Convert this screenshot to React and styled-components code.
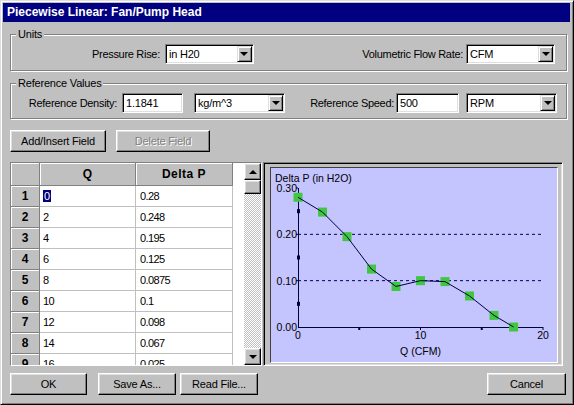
import React from 'react';
import styled, { createGlobalStyle, css } from 'styled-components';

const face = '#c0c0c0';

const GlobalStyle = createGlobalStyle`
  html, body {
    margin: 0;
    padding: 0;
    background: ${face};
  }
  body {
    font-family: "Liberation Sans", Arial, sans-serif;
    font-size: 11px;
    color: #000;
  }
  * { box-sizing: border-box; }
`;

const raised = css`
  background: ${face};
  border: 1px solid;
  border-color: #fff #000 #000 #fff;
  box-shadow: inset -1px -1px 0 #808080, inset 1px 1px 0 #dfdfdf;
`;

const sunken = css`
  border: 1px solid;
  border-color: #808080 #fff #fff #808080;
  box-shadow: inset 1px 1px 0 #000, inset -1px -1px 0 #dfdfdf;
`;

const Window = styled.div`
  width: 574px;
  height: 405px;
  background: ${face};
  border: 1px solid;
  border-color: #dfdfdf #000 #000 #dfdfdf;
  box-shadow: inset 1px 1px 0 #fff, inset -1px -1px 0 #808080;
  padding: 2px 3px 3px 2px;
  display: flex;
  flex-direction: column;
`;

const TitleBar = styled.div`
  height: 19px;
  background: #000080;
  color: #fff;
  font-weight: bold;
  font-size: 12px;
  line-height: 19px;
  padding-left: 4px;
  white-space: nowrap;
`;

const Body = styled.div`
  padding: 0 3px 0 7px;
  display: flex;
  flex-direction: column;
`;

const GroupBox = styled.fieldset`
  margin: ${p => p.$top}px 0 0;
  padding: 3px 5px ${p => p.$bottom}px;
  border: 1px solid #808080;
  box-shadow: inset 1px 1px 0 #fff, 1px 1px 0 #fff;
  min-width: 0;
`;

const Legend = styled.legend`
  padding: 0 2px;
  line-height: 13px;
  font-size: 11px;
  letter-spacing: -0.2px;
  background: ${face};
`;

const UnitsRow = styled.div`
  display: flex;
  justify-content: space-between;
  align-items: center;
  padding: 0 6px 0 76px;
`;

const RefRow = styled.div`
  display: flex;
  align-items: center;
  padding: 0 4px 0 9px;
`;

const Field = styled.div`
  display: flex;
  align-items: center;
  gap: ${p => p.$gap}px;
`;

const Label = styled.span`
  white-space: nowrap;
  letter-spacing: -0.3px;
  ${p => p.$w && css`
    width: ${p.$w}px;
    text-align: right;
  `}
  margin-left: ${p => p.$ml || 0};
`;

const Combo = styled.div`
  ${sunken};
  width: ${p => p.$w}px;
  height: 20px;
  margin-left: ${p => p.$ml || 0}px;
  background: #fff;
  display: flex;
  align-items: center;
  padding: 1px 1px 1px 3px;
`;

const ComboText = styled.span`
  flex: 1;
  white-space: nowrap;
  letter-spacing: -0.2px;
`;

const DropButton = styled.span`
  width: 15px;
  height: 16px;
  background: ${face};
  border: 1px solid;
  border-color: #dfdfdf #000 #000 #dfdfdf;
  box-shadow: inset 1px 1px 0 #fff, inset -1px -1px 0 #808080;
  display: flex;
  align-items: center;
  justify-content: center;

  &::after {
    content: "";
    border-left: 4px solid transparent;
    border-right: 4px solid transparent;
    border-top: 4px solid #000;
  }
`;

const TextBox = styled.div`
  ${sunken};
  width: ${p => p.$w}px;
  height: 20px;
  margin-left: ${p => p.$ml || 0}px;
  background: #fff;
  display: flex;
  align-items: center;
  padding: 0 3px;
  letter-spacing: -0.2px;
`;

const ButtonRow = styled.div`
  display: flex;
  align-items: center;
  margin-top: ${p => p.$top}px;
`;

const Button = styled.button`
  ${raised};
  width: ${p => p.$w}px;
  height: 22px;
  margin-left: ${p => p.$ml || 0}px;
  margin-right: ${p => p.$mr || 0}px;
  padding: 0;
  font-family: "Liberation Sans", Arial, sans-serif;
  font-size: 11px;
  letter-spacing: -0.2px;
  color: #000;

  &:disabled {
    color: #808080;
    text-shadow: 1px 1px 0 #fff;
  }
`;

const Main = styled.div`
  display: flex;
  margin-top: 10px;
  height: 204px;
`;

const GridFrame = styled.div`
  width: 252px;
  height: 204px;
  border: 1px solid;
  border-color: #808080 #fff #fff #808080;
  display: flex;
  background: #fff;
`;

const Table = styled.div`
  flex: 1;
  display: grid;
  grid-template-columns: 29px 96px 97px 11px;
  grid-template-rows: 23px;
  grid-auto-rows: 21px;
  align-content: start;
  overflow: hidden;
`;

const HeadCell = styled.div`
  background: ${face};
  border-right: 1px solid #808080;
  border-bottom: 1px solid #808080;
  box-shadow: inset 1px 1px 0 #fff;
  display: flex;
  align-items: center;
  justify-content: center;
  font-weight: bold;
  font-size: 12px;
  letter-spacing: ${p => (p.$wide ? '0.5px' : '0')};
`;

const Cell = styled.div`
  background: #fff;
  border-right: 1px solid #c0c0c0;
  border-bottom: 1px solid #c0c0c0;
  padding-left: ${p => p.$pl}px;
  display: flex;
  align-items: center;
  font-size: 11px;
  letter-spacing: -0.6px;
`;

const Filler = styled.div`
  background: #fff;
`;

const Selected = styled.span`
  background: #000080;
  color: #fff;
  padding: 0 1px;
`;

const ScrollBar = styled.div`
  width: 17px;
  display: flex;
  flex-direction: column;
`;

const ScrollButton = styled.div`
  ${raised};
  height: 17px;
  display: flex;
  align-items: center;
  justify-content: center;

  &::after {
    content: "";
    border-left: 4px solid transparent;
    border-right: 4px solid transparent;
    ${p => (p.$dir === 'up'
      ? 'border-bottom: 4px solid #000;'
      : 'border-top: 4px solid #000;')}
  }
`;

const Thumb = styled.div`
  ${raised};
  height: 14px;
`;

const Track = styled.div`
  flex: 1;
  background-color: #fff;
  background-image: conic-gradient(#c0c0c0 25%, transparent 0 50%, #c0c0c0 0 75%, transparent 0);
  background-size: 2px 2px;
`;

const ChartFrame = styled.div`
  ${sunken};
  width: 300px;
  height: 204px;
  margin-left: 1px;
  padding: 4px 4px 2px 6px;
  background: ${face};
`;

const Plot = styled.div`
  width: 100%;
  height: 100%;
  background: #c4c4ff;
  border: 1px solid;
  border-color: #404040 #fff #fff #404040;

  svg {
    display: block;
    font-family: "Liberation Sans", Arial, sans-serif;
    font-size: 10.5px;
  }
`;

const rows = [
  [0, 0.28],
  [2, 0.248],
  [4, 0.195],
  [6, 0.125],
  [8, 0.0875],
  [10, 0.1],
  [12, 0.098],
  [14, 0.067],
  [16, 0.025],
];

const points = [...rows, [17.6, 0]];

const X0 = 27;
const Y0 = 159;
const SX = 12.25;
const SY = 463.3;
const px = q => X0 + q * SX;
const py = v => Y0 - v * SY;

const Chart = () => {
  const ink = '#000040';
  const line = points.map(([q, v]) => `${px(q)},${py(v)}`).join(' ');
  return (
    <svg width="286" height="194" viewBox="0 0 286 194">
      {[0.1, 0.2].map(v => (
        <line key={v} x1={X0} x2={px(20)} y1={py(v)} y2={py(v)}
          stroke="#000060" strokeDasharray="3 3" />
      ))}
      <line x1={X0} x2={px(20)} y1={Y0 + 0.5} y2={Y0 + 0.5} stroke={ink} />
      <line x1={X0 + 0.5} x2={X0 + 0.5} y1={py(0.3)} y2={Y0} stroke={ink} />
      {[0.05, 0.15, 0.25].map(v => (
        <rect key={v} x={X0 - 1} y={py(v) - 2} width="3" height="4" fill={ink} />
      ))}
      {[0.1, 0.2, 0.3].map(v => (
        <line key={v} x1={X0 - 2} x2={X0} y1={py(v)} y2={py(v)} stroke={ink} />
      ))}
      {[5, 15].map(q => (
        <line key={q} x1={px(q)} x2={px(q)} y1={Y0} y2={Y0 + 3} stroke={ink} strokeWidth="2" />
      ))}
      {[10, 20].map(q => (
        <line key={q} x1={px(q)} x2={px(q)} y1={Y0} y2={Y0 + 3} stroke={ink} />
      ))}
      {points.map(([q, v]) => (
        <rect key={q} x={px(q) - 4.5} y={py(v) - 4.5} width="9" height="9" fill="#40c640" />
      ))}
      <polyline points={line} fill="none" stroke={ink} />
      <text x="4" y="14" fill="#000">Delta P (in H2O)</text>
      {[
        ['0.30', 0.3],
        ['0.20', 0.2],
        ['0.10', 0.1],
        ['0.00', 0],
      ].map(([t, v]) => (
        <text key={t} x={X0 - 1} y={py(v) + 4} textAnchor="end" fill="#000">{t}</text>
      ))}
      {[0, 10, 20].map(q => (
        <text key={q} x={px(q)} y="171" textAnchor="middle" fill="#000">{q}</text>
      ))}
      <text x={px(10)} y="187" textAnchor="middle" fill="#000">Q (CFM)</text>
    </svg>
  );
};

const DataGrid = () => (
  <GridFrame>
    <Table>
      <HeadCell />
      <HeadCell>Q</HeadCell>
      <HeadCell $wide>Delta P</HeadCell>
      <Filler />
      {rows.map(([q, v], i) => (
        <React.Fragment key={i}>
          <HeadCell>{i + 1}</HeadCell>
          <Cell $pl={3}>{i === 0 ? <Selected>{q}</Selected> : q}</Cell>
          <Cell $pl={4}>{v}</Cell>
          <Filler />
        </React.Fragment>
      ))}
    </Table>
    <ScrollBar>
      <ScrollButton $dir="up" />
      <Thumb />
      <Track />
      <ScrollButton $dir="down" />
    </ScrollBar>
  </GridFrame>
);

const Select = ({ w, ml, value }) => (
  <Combo $w={w} $ml={ml}>
    <ComboText>{value}</ComboText>
    <DropButton />
  </Combo>
);

const App = () => (
  <>
    <GlobalStyle />
    <Window>
      <TitleBar>Piecewise Linear: Fan/Pump Head</TitleBar>
      <Body>
        <GroupBox $top={6} $bottom={6}>
          <Legend>Units</Legend>
          <UnitsRow>
            <Field $gap={5}>
              <Label>Pressure Rise:</Label>
              <Select w={89} value="in H20" />
            </Field>
            <Field $gap={3}>
              <Label>Volumetric Flow Rate:</Label>
              <Select w={89} value="CFM" />
            </Field>
          </UnitsRow>
        </GroupBox>

        <GroupBox $top={6} $bottom={5}>
          <Legend>Reference Values</Legend>
          <RefRow>
            <Label $w={92}>Reference Density:</Label>
            <TextBox $w={61} $ml={5}>1.1841</TextBox>
            <Select w={91} ml={11} value="kg/m^3" />
            <Label $ml="auto">Reference Speed:</Label>
            <TextBox $w={63} $ml={2}>500</TextBox>
            <Select w={91} ml={7} value="RPM" />
          </RefRow>
        </GroupBox>

        <ButtonRow $top={11}>
          <Button $w={96}>Add/Insert Field</Button>
          <Button $w={94} $ml={10} disabled>Delete Field</Button>
        </ButtonRow>

        <Main>
          <DataGrid />
          <ChartFrame>
            <Plot>
              <Chart />
            </Plot>
          </ChartFrame>
        </Main>

        <ButtonRow $top={7}>
          <Button $w={77}>OK</Button>
          <Button $w={78} $ml={11}>Save As...</Button>
          <Button $w={78} $ml={4}>Read File...</Button>
          <Button $w={79} $ml="auto" $mr={1} style={{ marginLeft: 'auto' }}>Cancel</Button>
        </ButtonRow>
      </Body>
    </Window>
  </>
);

export default App;
